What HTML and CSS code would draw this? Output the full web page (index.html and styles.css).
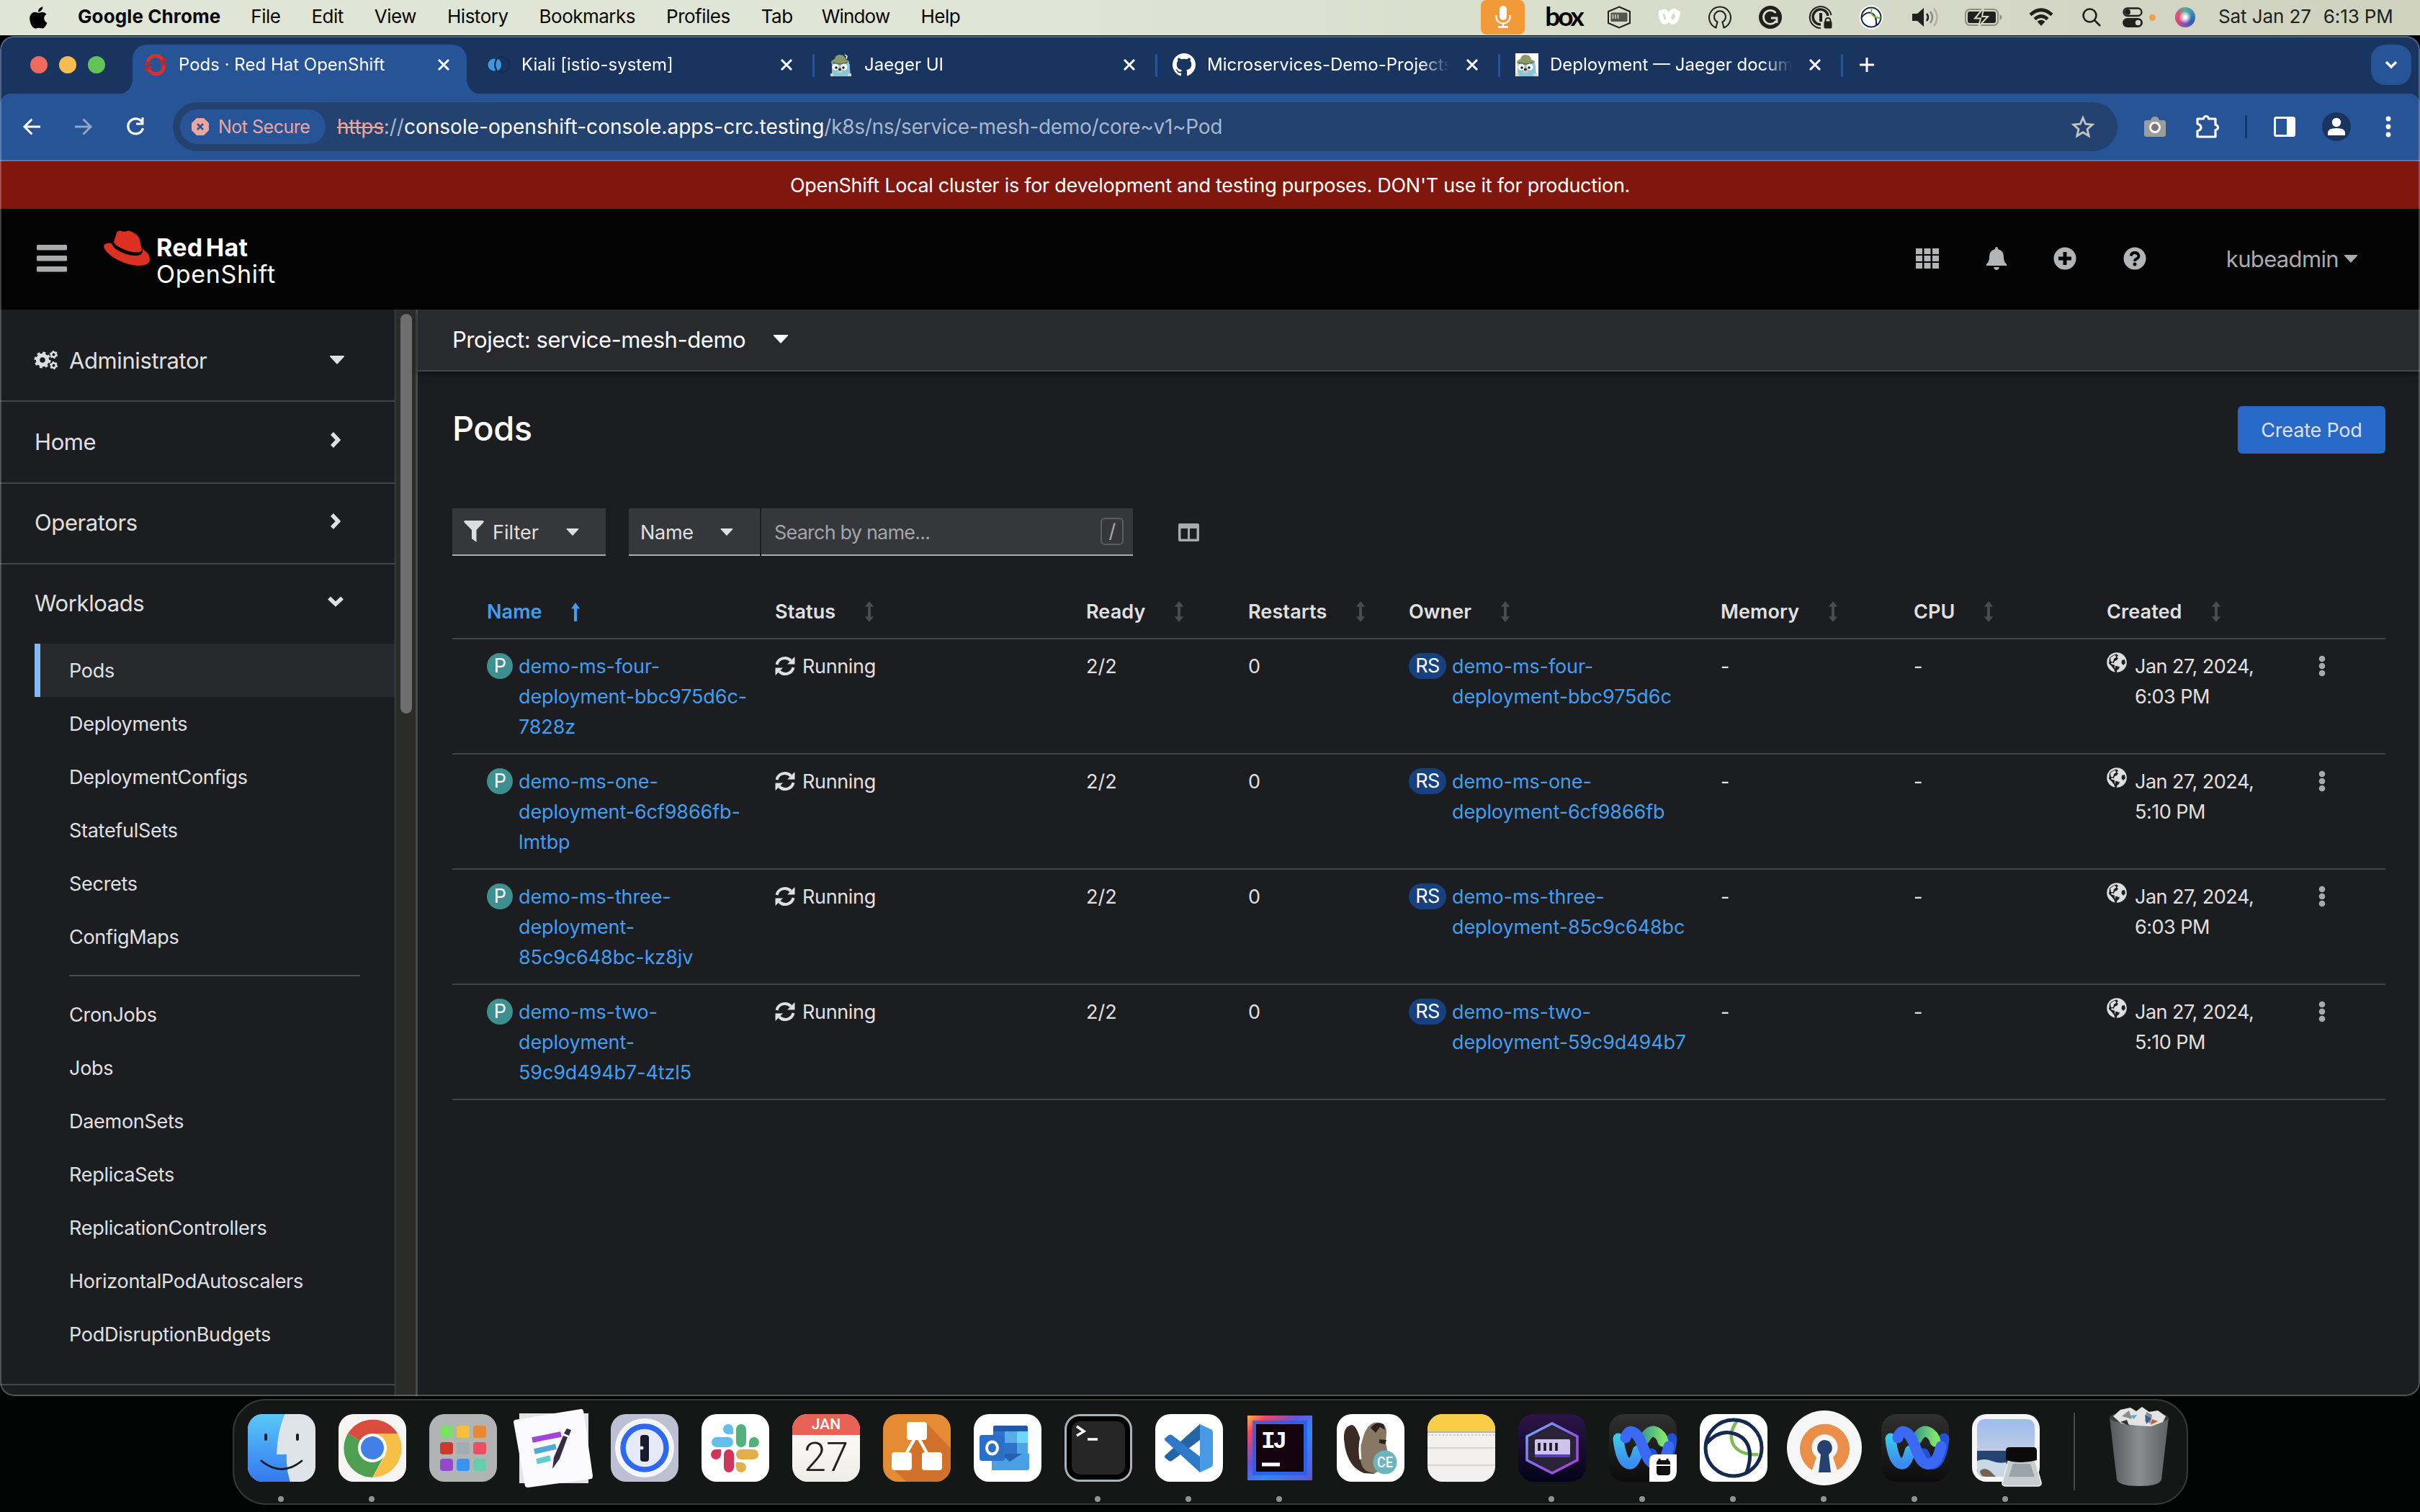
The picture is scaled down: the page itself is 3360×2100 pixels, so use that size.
FILE: index.html
```html
<!DOCTYPE html>
<html lang="en">
<head>
<meta charset="utf-8">
<title>Pods · Red Hat OpenShift</title>
<link rel="stylesheet" href="styles.css">
</head>
<body>
<svg class="defs" width="0" height="0">
  <defs>
    <symbol id="caret" viewBox="0 0 20 12"><path d="M0.5 0h19q1 .4.3 1.500L11 11q-1 1.200-2 0L.2 1.500Q-.5.400.5 0Z" fill="currentColor"/></symbol>
    <symbol id="chev" viewBox="0 0 16 24"><path d="M4 3l8.500 9L4 21" fill="none" stroke="currentColor" stroke-width="5.500"/></symbol>
    <symbol id="close" viewBox="0 0 20 20"><path d="M3 3l14 14M17 3L3 17" stroke="#fff" stroke-width="3" fill="none"/></symbol>
    <symbol id="sort" viewBox="0 0 14 30"><path d="M7 0l6.500 8H9v14h4.500L7 30 .5 22H5V8H.5Z" fill="#4b4c51"/></symbol>
    <symbol id="sync" viewBox="0 0 28 28"><g fill="none" stroke="#e0e0e0" stroke-width="4"><path d="M2.500 12A11.500 11.500 0 0 1 22 6.500"/><path d="M25.500 16A11.500 11.500 0 0 1 6 21.500"/></g><path d="M27.500 1v10.500H17ZM.5 27V16.500H11Z" fill="#e0e0e0"/></symbol>
    <symbol id="globe" viewBox="0 0 28 28"><circle cx="14" cy="14" r="13.800" fill="#e0e0e0"/><path d="M4 8q4-5 10-5.500l2 2-2 2 2 1.500-2 3-3 1-1 3-3-1-1 2 4 1.500 5 .5 3 2-1 3-3 2v3l-2 .5-2-5-3-4-4-4ZM21 11l4-1 1 5-3 3-2.500-3Z" fill="#1c1d21"/><path d="M5 8q4-4 7-4l1 3-3 2-1 4-3 0ZM11 16l5 1 2 2-3 4-2 2-2-4Z" fill="#e0e0e0"/><path d="M12 18.500l5 1.500-2 3.500-1 3-2-3Z" fill="#1c1d21"/></symbol>
    <symbol id="kebab" viewBox="0 0 10 30"><g fill="#a9aaad"><circle cx="5" cy="5" r="4.300"/><circle cx="5" cy="15" r="4.300"/><circle cx="5" cy="25" r="4.300"/></g></symbol>
    <symbol id="gopher" viewBox="0 0 32 32"><path d="M3 32V17Q2 9 8 8h12q9 2 8 13l1 11Z" fill="#86c7da"/><path d="M2 14q-1-4 5-6 1-6 7-6 7 0 8 7 6 1 5 4-11 3-25 1Z" fill="#8b9a68"/><path d="M5 12q10 4 19 0v2q-10 3-19 1Z" fill="#5d6b40"/><path d="M21 2l3 2-1 4" stroke="#fff" stroke-width="1.500" fill="none"/><circle cx="8" cy="19" r="4.500" fill="#fff"/><circle cx="20" cy="19" r="4.500" fill="#fff"/><circle cx="9" cy="20" r="1.800" fill="#222"/><circle cx="19" cy="20" r="1.800" fill="#222"/><path d="M11 23h6v4h-6Z" fill="#e7cdb0"/><circle cx="14" cy="22.500" r="2" fill="#40352c"/><path d="M1 28h4v4H1ZM25 28h5v4h-5Z" fill="#e7cdb0"/></symbol>
    <linearGradient id="wxc" x1="0" y1="0" x2="0" y2="1"><stop offset="0" stop-color="#3ec6e8"/><stop offset="1" stop-color="#3b8cf0"/></linearGradient>
    <linearGradient id="wxg" x1="0" y1="0" x2="1" y2="0"><stop offset="0" stop-color="#3fa08c"/><stop offset="1" stop-color="#80e46a"/></linearGradient>
    <linearGradient id="dk" x1="0" y1="0" x2="0" y2="1"><stop offset="0" stop-color="#303030"/><stop offset="1" stop-color="#0c0c0c"/></linearGradient>
    <symbol id="webex" viewBox="0 0 96 96"><rect x="1" y="1" width="94" height="94" rx="21" fill="url(#dk)"/><g fill="none" stroke-width="15" stroke-linecap="round"><path d="M88 35Q85 66 74 70 66 72 60 56" stroke="#2450d8"/><path d="M14 35Q17 66 28 70 36 72 41 52" stroke="url(#wxc)"/><path d="M50 36Q57 22 66 26 74 30 76 39" stroke="url(#wxg)"/><path d="M24 34Q27 24 33 25.500C49 29 49 70 66 70.500 76 70 80 62 84 46" stroke="#3c69f4"/></g></symbol>
  </defs>
</svg>

<header class="menubar">
  <svg class="apple" viewBox="0 0 28 32"><path d="M19 0q.5 3-2 5.500T12.500 8Q12 5 14 3T19 0ZM25.500 23.500Q22 31.500 18.500 31.500 17 31.500 15.500 31T11 31q-1.500.8-3 .5Q4 31 1.500 24-1.500 15 2.500 10.500 6 7 10.500 8.500l2.500.8 3-.9q5-1.600 8.500 2.600-4 2.500-3.500 6.500t4.500 6Z"/></svg>
  <nav class="menus"><b>Google Chrome</b><span>File</span><span>Edit</span><span>View</span><span>History</span><span>Bookmarks</span><span>Profiles</span><span>Tab</span><span class="win">Window</span><span>Help</span></nav>
  <div class="tray">
    <i class="mic"><svg width="22" height="32" viewBox="0 0 22 32"><rect x="6" y="0" width="10" height="20" rx="5" fill="#fff"/><path d="M1.500 13v3a9.500 8.500 0 0 0 19 0v-3M11 24v5M4 29.500h14" stroke="#fff" stroke-width="2.300" fill="none"/></svg></i>
    <i class="c84"><b class="boxlogo">box</b></i>
    <i class="c70"><svg width="32" height="32" viewBox="0 0 32 32"><path d="M16 1.500L31 8v16l-15 6.500L1 24V8Z" fill="none" stroke="#20211d" stroke-width="2"/><rect x="4.500" y="9.500" width="23" height="12.500" rx="1.500" fill="#55564e"/><path d="M7.500 12v6M11 12v6M14.500 12v6" stroke="#e0e3d4" stroke-width="1.400"/></svg></i>
    <i class="c70"><svg width="32" height="24" viewBox="0 0 32 24" fill="none" stroke="#fff" stroke-width="6" stroke-linecap="round"><path d="M3.500 5q1.500 14 5.500 14t6-7 6-9q5-1 5 5"/><path d="M7 4q4-2 6 5t7 10q6 0 8-13"/></svg></i>
    <i class="c70"><svg width="32" height="32" viewBox="0 0 32 32" fill="none" stroke="#20211d" stroke-width="2"><path d="M10.500 30.500A15 15 0 1 1 21.500 30.500L19.500 22.500A8 8 0 1 0 12.500 22.500Z"/></svg></i>
    <i class="c70"><svg width="32" height="32" viewBox="0 0 32 32"><circle cx="16" cy="16" r="16" fill="#20211d"/><path d="M23.500 10A9.500 9.500 0 1 0 24 21M25 24v-7h-8" fill="none" stroke="#dcdfcf" stroke-width="2.800"/></svg></i>
    <i class="c70"><svg width="32" height="32" viewBox="0 0 32 32" fill="none" stroke="#20211d"><path d="M16 31A15 15 0 1 1 30.500 13" stroke-width="2"/><path d="M16 26A10.500 10.500 0 1 1 26 14" stroke-width="3.500"/><path d="M16 10v12" stroke-width="4"/><path d="M22.500 22v-1.500a3.500 3.500 0 0 1 7 0V22" stroke-width="2"/><rect x="21" y="22" width="10" height="9" rx="1" fill="#20211d"/></svg></i>
    <i class="c70"><svg width="34" height="34" viewBox="0 0 34 34"><circle cx="17" cy="17" r="16.500" fill="#fff"/><g fill="none" stroke="#17294d" stroke-width="2"><circle cx="17" cy="17" r="13.500"/><path d="M4 17q6-8 13-6 8 3 7 17"/></g><path d="M18 4q-4 13 12 14" fill="none" stroke="#79b84a" stroke-width="2"/></svg></i>
    <i class="c68 vol"><svg width="38" height="28" viewBox="0 0 38 28"><path d="M0 9h7l9-8v26l-9-8H0Z" fill="#20211d"/><g fill="none" stroke-width="2.600"><path d="M20 9q4 5 0 10" stroke="#20211d"/><path d="M25 6q6 8 0 16" stroke="#8b8e80"/><path d="M30 2q9 12 0 24" stroke="#b0b3a3"/></g></svg></i>
    <i class="c92"><svg width="52" height="24" viewBox="0 0 52 24"><rect x="1" y="1" width="45" height="22" rx="6" fill="none" stroke="#8b8e80" stroke-width="2"/><rect x="4" y="4" width="39" height="16" rx="3" fill="#20211d"/><path d="M48.500 8q3 1.500 3 4t-3 4Z" fill="#8b8e80"/><path d="M26-1L14 13.500h8L19 25l13-14h-8Z" fill="#20211d" stroke="#d5d8c6" stroke-width="2"/></svg></i>
    <i class="c68"><svg width="34" height="26" viewBox="0 0 34 26" fill="none" stroke="#20211d" stroke-width="4.600"><path d="M2 9.500Q17-4 32 9.500M8 15.500q9-8 18 0"/><path d="M17 25l-5.500-6q5.500-4.500 11 0Z" fill="#20211d" stroke="none"/></svg></i>
    <i class="c72"><svg width="26" height="26" viewBox="0 0 26 26" fill="none" stroke="#20211d" stroke-width="2.600"><circle cx="10.500" cy="10.500" r="9"/><path d="M17 17l8 8"/></svg></i>
    <i class="c42"><svg width="28" height="28" viewBox="0 0 28 28"><rect x="1.500" y="1.500" width="25" height="10.500" rx="5.200" fill="none" stroke="#20211d" stroke-width="2.400"/><circle cx="7" cy="6.800" r="4" fill="#20211d"/><rect y="15" width="28" height="13" rx="6.500" fill="#20211d"/><circle cx="21.500" cy="21.500" r="3.700" fill="#d5d8c6"/></svg></i>
    <i class="c12"><i class="dot"></i></i>
    <i class="c80"><i class="siri"></i></i>
    <div class="clock"><span>Sat Jan 27</span><span>6:13 PM</span></div>
  </div>
</header>

<section class="window">
  <div class="tabstrip">
    <div class="lights"><i class="l-r"></i><i class="l-y"></i><i class="l-g"></i></div>
    <div class="tab active">
      <svg class="fav" viewBox="0 0 32 32" fill="none" stroke="#d8302c" stroke-width="5"><path d="M5 12Q9 2 18 3.500q5 1 8 5.500M27 17q1 9-8 11.500Q11 30 6 22"/><path d="M1 16l8-3M1 22l9-3M22 12l9-4M23 17l8-3" stroke-width="4" stroke="#b8282f"/></svg>
      <span class="tt">Pods · Red Hat OpenShift</span><svg class="x"><use href="#close"/></svg>
    </div>
    <div class="tab sep">
      <svg class="fav" viewBox="0 0 32 32"><circle cx="21" cy="16" r="10.500" fill="none" stroke="#14304f" stroke-width="2"/><path d="M10 7.500a8.500 8.500 0 0 0 0 17q1.500 0 2-.5-4-8 0-16-.5-.5-2-.5Z" fill="#3f97dd"/><path d="M15 7.500q5 3 5 8.500t-5 8.500q-5-8.500 0-17Z" fill="#3f97dd"/></svg>
      <span class="tt">Kiali [istio-system]</span><svg class="x"><use href="#close"/></svg>
    </div>
    <div class="tab sep"><svg class="fav"><use href="#gopher"/></svg><span class="tt">Jaeger UI</span><svg class="x"><use href="#close"/></svg></div>
    <div class="tab sep">
      <svg class="fav" viewBox="0 0 16 16"><path fill="#fff" d="M8 0C3.580 0 0 3.580 0 8c0 3.540 2.290 6.530 5.470 7.590.4.070.550-.170.550-.380 0-.190-.010-.820-.010-1.490-2.010.370-2.530-.490-2.690-.940-.090-.230-.480-.940-.820-1.130-.280-.150-.680-.520-.010-.530.630-.010 1.080.580 1.230.820.720 1.210 1.870.870 2.330.660.070-.520.280-.870.510-1.070-1.780-.200-3.640-.890-3.640-3.950 0-.870.310-1.590.820-2.150-.080-.200-.360-1.020.080-2.120 0 0 .670-.210 2.200.820.640-.180 1.320-.270 2-.270s1.360.090 2 .270c1.530-1.040 2.200-.820 2.200-.820.440 1.100.160 1.920.080 2.120.510.560.820 1.270.820 2.150 0 3.070-1.870 3.750-3.650 3.950.290.250.540.730.540 1.480 0 1.070-.010 1.930-.010 2.200 0 .210.150.460.550.380A8.010 8.010 0 0 0 16 8c0-4.420-3.580-8-8-8Z"/></svg>
      <span class="tt">Microservices-Demo-Projects</span><svg class="x"><use href="#close"/></svg>
    </div>
    <div class="tab sep"><svg class="fav white"><use href="#gopher"/></svg><span class="tt">Deployment — Jaeger documentation</span><svg class="x"><use href="#close"/></svg></div>
    <svg class="plus" viewBox="0 0 20 20"><path d="M10 0v20M0 10h20" stroke="#fff" stroke-width="3"/></svg>
    <div class="tabsearch"><svg width="18" height="12" viewBox="0 0 18 12"><path d="M2 2l7 7 7-7" fill="none" stroke="#fff" stroke-width="3.500"/></svg></div>
  </div>

  <div class="toolbar">
    <div class="navbtns">
      <svg width="24" height="24" viewBox="0 0 24 24" fill="none" stroke="#fff" stroke-width="3"><path d="M24 12H3M12.500 1.500L2 12l10.500 10.500"/></svg>
      <svg width="24" height="24" viewBox="0 0 24 24" fill="none" stroke="#8ea6cb" stroke-width="3"><path d="M0 12h21M11.500 1.500L22 12 11.500 22.500"/></svg>
      <svg width="26" height="26" viewBox="0 0 26 26"><path d="M22 6.500A10.500 10.500 0 1 0 23.500 15" fill="none" stroke="#fff" stroke-width="3.200"/><path d="M24.500 0v10.500H14V7.500h7.500V0Z" fill="#fff"/></svg>
    </div>
    <div class="omnibox">
      <div class="chip"><svg width="24" height="24" viewBox="0 0 24 24"><path d="M7 0h10l7 7v10l-7 7H7l-7-7V7Z" fill="#eda69e"/><path d="M8 8l8 8M16 8l-8 8" stroke="#275496" stroke-width="2.600"/></svg><span>Not Secure</span></div>
      <div class="url"><s>https</s><span class="dim">://</span><span class="host">console-openshift-console.apps-crc.testing</span><span class="dim path">/k8s/ns/service-mesh-demo/core~v1~Pod</span></div>
      <svg class="star" width="32" height="32" viewBox="0 0 32 32"><path d="M16 3.500l3.700 8.700 9.500.9-7.200 6.300 2.200 9.300L16 23.700l-8.200 5 2.200-9.300-7.200-6.300 9.500-.9Z" fill="none" stroke="#c4c4c2" stroke-width="2.800"/></svg>
    </div>
    <div class="ext">
      <svg width="30" height="28" viewBox="0 0 30 28"><path d="M3 5h6q1-5 6-5t6 5h6q3 0 3 3v17q0 3-3 3H3q-3 0-3-3V8q0-3 3-3Z" fill="#9b9c9c"/><circle cx="15" cy="15" r="6.500" fill="#777" stroke="#fff" stroke-width="3"/></svg>
      <svg width="34" height="34" viewBox="0 0 34 34"><path d="M3 6h8.500a3.500 3.500 0 1 1 7 0H28v8.500a3.500 3.500 0 1 1 0 7V31H3v-8q5-1.500 5-5t-5-5Z" fill="none" stroke="#fff" stroke-width="3.200" stroke-linejoin="round"/></svg>
      <i class="vsep"></i>
      <svg width="30" height="28" viewBox="0 0 30 28"><rect x="1.500" y="1.500" width="27" height="25" rx="2" fill="none" stroke="#fff" stroke-width="3"/><path d="M18 0h10v28H18Z" fill="#fff"/></svg>
      <svg width="40" height="40" viewBox="0 0 40 40"><circle cx="20" cy="20" r="20" fill="#19355f"/><circle cx="20" cy="14" r="6.200" fill="#fff"/><path d="M8 32v-4q0-6 12-6t12 6v4Z" fill="#fff"/></svg>
      <svg width="8" height="30" viewBox="0 0 8 30" fill="#fff"><circle cx="4" cy="4" r="3.400"/><circle cx="4" cy="15" r="3.400"/><circle cx="4" cy="26" r="3.400"/></svg>
    </div>
  </div>

  <div class="notice">OpenShift Local cluster is for development and testing purposes. DON'T use it for production.</div>

  <div class="masthead">
    <svg class="burger" width="42" height="38" viewBox="0 0 42 38" fill="#a8aaac"><rect width="42" height="7.500" rx="1.500"/><rect y="15" width="42" height="7.500" rx="1.500"/><rect y="30" width="42" height="7.500" rx="1.500"/></svg>
    <svg class="hat" width="64" height="49" viewBox="0 0 64 49"><path d="M14 16L18 3Q20-1 26 1.500l5 0q3-2 7 0l7 4q4 3 5 8l3 13q0 4-7 4-9 0-20-5T14 16ZM11 18q1 5 9 10 14 8 27 7 6-1 7-5l0-4q10 6 10 14 0 9-17 9-16-1-31-10T0 22q1-5 11-4Z" fill="#dc3022"/></svg>
    <div class="brand"><b>Red Hat</b><span>OpenShift</span></div>
    <div class="tools">
      <svg width="32" height="28" viewBox="0 0 32 28" fill="#b2b4b6"><path d="M0 0h9v8H0ZM11.500 0h9v8h-9ZM23 0h9v8h-9ZM0 10h9v8H0ZM11.500 10h9v8h-9ZM23 10h9v8h-9ZM0 20h9v8H0ZM11.500 20h9v8h-9ZM23 20h9v8h-9Z"/></svg>
      <svg width="28" height="32" viewBox="0 0 28 32" fill="#b2b4b6"><path d="M14 0q2 0 2 3 8 2 8 11 0 7 4 10v2H0v-2q4-3 4-10 0-9 8-11 0-3 2-3ZM10 28h8q-1 4-4 4t-4-4Z"/></svg>
      <svg width="32" height="32" viewBox="0 0 32 32"><circle cx="16" cy="16" r="15.500" fill="#b2b4b6"/><path d="M16 7v18M7 16h18" stroke="#030303" stroke-width="5"/></svg>
      <svg width="32" height="32" viewBox="0 0 32 32"><circle cx="16" cy="16" r="15.500" fill="#b2b4b6"/><path d="M10.500 12.500Q11.500 8 16 8t5.500 4.300q0 2.700-3 4.200-2.500 1.200-2.500 3.200" fill="none" stroke="#030303" stroke-width="3.800"/><circle cx="16" cy="24" r="2.500" fill="#030303"/></svg>
      <div class="user">kubeadmin<svg width="18" height="11"><use href="#caret"/></svg></div>
    </div>
  </div>

  <div class="body">
    <aside class="sidebar">
      <div class="persp"><svg width="32" height="28" viewBox="0 0 32 28"><g fill="none" stroke="#dcdddf"><circle cx="11" cy="14" r="6.500" stroke-width="5.500"/><circle cx="11" cy="14" r="10" stroke-width="3" stroke-dasharray="4 3.850"/><circle cx="26.500" cy="6.500" r="3.300" stroke-width="2.600"/><circle cx="26.500" cy="6.500" r="4.800" stroke-width="1.600" stroke-dasharray="2.500 2.500"/><circle cx="26.500" cy="21.500" r="3.300" stroke-width="2.600"/><circle cx="26.500" cy="21.500" r="4.800" stroke-width="1.600" stroke-dasharray="2.500 2.500"/></g></svg><span>Administrator</span><svg class="car" width="20" height="12"><use href="#caret"/></svg></div>
      <div class="sec"><span>Home</span><svg width="16" height="24"><use href="#chev"/></svg></div>
      <div class="sec two"><span>Operators</span><svg width="16" height="24"><use href="#chev"/></svg></div>
      <div class="sec open"><span>Workloads</span><svg width="24" height="16" viewBox="0 0 24 16"><path d="M3 3.500l9 8.500 9-8.500" fill="none" stroke="currentColor" stroke-width="5.500"/></svg></div>
      <ul class="links">
        <li class="cur">Pods</li><li>Deployments</li><li>DeploymentConfigs</li><li>StatefulSets</li><li>Secrets</li><li>ConfigMaps</li>
        <li class="rule"></li>
        <li>CronJobs</li><li>Jobs</li><li>DaemonSets</li><li>ReplicaSets</li><li>ReplicationControllers</li><li>HorizontalPodAutoscalers</li><li>PodDisruptionBudgets</li>
      </ul>
    </aside>
    <div class="scroll"><i></i></div>
    <main class="main">
      <div class="project"><span>Project: service-mesh-demo</span><svg width="20" height="12"><use href="#caret"/></svg></div>
      <div class="content">
        <div class="head"><h1>Pods</h1><button>Create Pod</button></div>
        <div class="filters">
          <div class="ctl filter"><svg width="28" height="30" viewBox="0 0 28 30"><path d="M1 0h26q1.500 1 0 3L17.500 13v17L11 25V13L1 3Q-.5 1 1 0Z" fill="#dcdddf"/></svg><span>Filter</span><svg class="c" width="18" height="10"><use href="#caret"/></svg></div>
          <div class="ctl name"><span>Name</span><svg class="c" width="18" height="10"><use href="#caret"/></svg></div>
          <div class="ctl search"><span>Search by name...</span><kbd>/</kbd></div>
          <svg class="cols" width="29" height="25" viewBox="0 0 29 25"><path fill-rule="evenodd" d="M2 0h25q2 0 2 2v21q0 2-2 2H2q-2 0-2-2V2Q0 0 2 0ZM3.500 7v14.500h9.500V7ZM16 7v14.500h9.500V7Z" fill="#a9aaac"/></svg>
        </div>
        <div class="table">
          <div class="row th">
            <div class="asc">Name<svg class="up" width="12" height="26" viewBox="0 0 12 26"><path d="M6 0l6 8.500H8V26H4V8.500H0Z" fill="#429ef0"/></svg></div>
            <div>Status<svg><use href="#sort"/></svg></div><div>Ready<svg><use href="#sort"/></svg></div><div>Restarts<svg><use href="#sort"/></svg></div><div>Owner<svg><use href="#sort"/></svg></div><div>Memory<svg><use href="#sort"/></svg></div><div>CPU<svg><use href="#sort"/></svg></div><div>Created<svg><use href="#sort"/></svg></div>
          </div>
          <div class="row">
            <div class="res"><b class="p">P</b><a>demo-ms-four-<br>deployment-bbc975d6c-<br>7828z</a></div>
            <div class="st"><svg><use href="#sync"/></svg>Running</div><div class="n">2/2</div><div class="n">0</div>
            <div class="res"><b class="rs">RS</b><a>demo-ms-four-<br>deployment-bbc975d6c</a></div><div>-</div><div>-</div>
            <div class="dt"><svg><use href="#globe"/></svg><span>Jan 27, 2024,<br>6:03 PM</span></div><div class="kb"><svg><use href="#kebab"/></svg></div>
          </div>
          <div class="row">
            <div class="res"><b class="p">P</b><a>demo-ms-one-<br>deployment-6cf9866fb-<br>lmtbp</a></div>
            <div class="st"><svg><use href="#sync"/></svg>Running</div><div class="n">2/2</div><div class="n">0</div>
            <div class="res"><b class="rs">RS</b><a>demo-ms-one-<br>deployment-6cf9866fb</a></div><div>-</div><div>-</div>
            <div class="dt"><svg><use href="#globe"/></svg><span>Jan 27, 2024,<br>5:10 PM</span></div><div class="kb"><svg><use href="#kebab"/></svg></div>
          </div>
          <div class="row">
            <div class="res"><b class="p">P</b><a>demo-ms-three-<br>deployment-<br>85c9c648bc-kz8jv</a></div>
            <div class="st"><svg><use href="#sync"/></svg>Running</div><div class="n">2/2</div><div class="n">0</div>
            <div class="res"><b class="rs">RS</b><a>demo-ms-three-<br>deployment-85c9c648bc</a></div><div>-</div><div>-</div>
            <div class="dt"><svg><use href="#globe"/></svg><span>Jan 27, 2024,<br>6:03 PM</span></div><div class="kb"><svg><use href="#kebab"/></svg></div>
          </div>
          <div class="row">
            <div class="res"><b class="p">P</b><a>demo-ms-two-<br>deployment-<br>59c9d494b7-4tzl5</a></div>
            <div class="st"><svg><use href="#sync"/></svg>Running</div><div class="n">2/2</div><div class="n">0</div>
            <div class="res"><b class="rs">RS</b><a>demo-ms-two-<br>deployment-59c9d494b7</a></div><div>-</div><div>-</div>
            <div class="dt"><svg><use href="#globe"/></svg><span>Jan 27, 2024,<br>5:10 PM</span></div><div class="kb"><svg><use href="#kebab"/></svg></div>
          </div>
        </div>
      </div>
    </main>
  </div>
</section>

<footer class="dock">
  <div class="app on"><svg viewBox="0 0 96 96"><defs><linearGradient id="fi" x1="0" y1="0" x2="0" y2="1"><stop offset="0" stop-color="#5ac8f8"/><stop offset="1" stop-color="#3478f0"/></linearGradient><clipPath id="rr"><rect x="1" y="1" width="94" height="94" rx="21"/></clipPath></defs><g clip-path="url(#rr)"><rect width="96" height="96" fill="#dfe3ea"/><path d="M0 0h53Q42 24 41 57h14q-1 20 5 39H0Z" fill="url(#fi)"/></g><g fill="none" stroke="#1b1b20" stroke-width="4" stroke-linecap="round"><path d="M26 30v6M70 30v6"/><path d="M20 66q28 23 56 0" stroke-width="2.800"/></g></svg></div>
  <div class="app on"><svg viewBox="0 0 96 96"><rect x="1" y="1" width="94" height="94" rx="21" fill="#f6f5f4"/><path d="M48 48L14 28A40.500 40.500 0 0 1 83 28Z" fill="#da4c3d"/><path d="M48 48V28h35A40.500 40.500 0 0 1 48 89l18-31Z" fill="#f5c043"/><path d="M48 48l17 10-17 31A40.500 40.500 0 0 1 14 28Z" fill="#4f9f52"/><circle cx="48" cy="48" r="20" fill="#fff"/><circle cx="48" cy="48" r="16" fill="#4280e8"/></svg></div>
  <div class="app"><svg viewBox="0 0 96 96"><rect x="1" y="1" width="94" height="94" rx="21" fill="#b1b3b4"/><g><rect x="16" y="17" width="18" height="17" rx="4" fill="#7be068"/><rect x="39" y="17" width="18" height="17" rx="4" fill="#f6bd40"/><rect x="62" y="17" width="18" height="17" rx="4" fill="#e88734"/><rect x="16" y="40" width="18" height="17" rx="4" fill="#cb392c"/><rect x="39" y="40" width="18" height="17" rx="4" fill="#a3adb1"/><rect x="62" y="40" width="18" height="17" rx="4" fill="#ed4e61"/><rect x="16" y="63" width="18" height="17" rx="4" fill="#914ac9"/><rect x="39" y="63" width="18" height="17" rx="4" fill="#3894f2"/><rect x="62" y="63" width="18" height="17" rx="4" fill="#67cdab"/></g></svg></div>
  <div class="app"><svg viewBox="0 0 96 96"><path d="M0 0h96v97H0Z" fill="#e3e3e6"/><path d="M-6 9L86-6Q88-6 89 -4l13 91q0 3-2 4L12 103q-3 0-4-2L-8 12q0-2 2-3Z" fill="#fbfbfd"/><g stroke-linecap="butt" fill="none"><path d="M18 37l40-8" stroke="#a044dc" stroke-width="7.500"/><path d="M21 53l30-7" stroke="#54a7cf" stroke-width="7.500"/><path d="M24 67l19-5" stroke="#5cd0c8" stroke-width="7.500"/></g><path d="M46 77l2-16 13-30 6 2-11 30ZM62 28l4-7 6 2-3 8Z" fill="#382b45"/></svg></div>
  <div class="app"><svg viewBox="0 0 96 96"><rect x="1" y="1" width="94" height="94" rx="21" fill="#bcc0d2"/><circle cx="48" cy="48" r="41" fill="#f5f6fb"/><circle cx="48" cy="48" r="30" fill="#e6eaf8" stroke="#2c68f2" stroke-width="7.500"/><rect x="42" y="30" width="12" height="37" rx="4" fill="#171b30"/><circle cx="44" cy="48" r="2.500" fill="#e6eaf8"/></svg></div>
  <div class="app"><svg viewBox="0 0 96 96"><rect x="1" y="1" width="94" height="94" rx="21" fill="#fff"/><g fill="#63bfe9"><rect x="15" y="33" width="30" height="14" rx="7"/><path d="M45 29V22a7 7 0 1 0-7 7Z"/></g><g fill="#54b07d"><rect x="49" y="15" width="14" height="32" rx="7"/><path d="M67 47h7a7 7 0 1 0-7-7Z"/></g><g fill="#ce375c"><rect x="32" y="50" width="14" height="32" rx="7"/><path d="M28 50h-7a7 7 0 1 0 7 7Z"/></g><g fill="#e2b04a"><rect x="49" y="50" width="31" height="14" rx="7"/><path d="M49 68v7a7 7 0 1 0 7-7Z"/></g></svg></div>
  <div class="app"><div class="cal"><b>JAN</b><span>27</span></div></div>
  <div class="app"><svg viewBox="0 0 96 96"><g clip-path="url(#rr)"><rect width="96" height="96" fill="#e48b34"/><path d="M60 12L96 50v46H34L14 76Z" fill="#d0712c"/></g><path d="M48 30L27 66M48 30l20 36" stroke="#fff" stroke-width="4.500"/><g fill="#fff"><rect x="34" y="12" width="28" height="25" rx="4"/><rect x="13" y="54" width="28" height="25" rx="4"/><rect x="55" y="54" width="28" height="25" rx="4"/></g></svg></div>
  <div class="app"><svg viewBox="0 0 96 96"><rect x="1" y="1" width="94" height="94" rx="21" fill="#fff"/><rect x="28" y="17" width="48" height="46" rx="3" fill="#2f72cc"/><path d="M28 20q0-3 3-3h42q3 0 3 3v5H28Z" fill="#2358a4"/><path d="M44 25h17v16H44Z" fill="#57abe8"/><path d="M61 25h15v16H61Z" fill="#6fd6fb"/><path d="M61 41h15v22H61Z" fill="#50a4e5"/><path d="M26 56h52v20q0 3-3 3H26Z" fill="#4aa0e4"/><path d="M37 56h31L51 67Z" fill="#2560b2"/><rect x="9" y="30" width="35" height="36" rx="4" fill="#2c6fc9"/><ellipse cx="26.500" cy="48" rx="7.500" ry="8.500" fill="none" stroke="#fff" stroke-width="4"/></svg></div>
  <div class="app on"><svg viewBox="0 0 96 96"><rect x="1" y="1" width="94" height="94" rx="21" fill="#a9b4ba"/><rect x="4" y="4" width="88" height="88" rx="18" fill="#030303"/><rect x="11" y="11" width="74" height="74" rx="12" fill="#262626"/><path d="M18 18l10 7-10 6M33 36h14" fill="none" stroke="#fff" stroke-width="3.500"/></svg></div>
  <div class="app on"><svg viewBox="0 0 96 96"><rect x="1" y="1" width="94" height="94" rx="21" fill="#fff"/><path d="M63 15L15 58q-2 2 0 4l5 4q2 1 4 0L63 37Z" fill="#2565a6"/><path d="M63 82L15 38q-2-2 0-4l5-4q2-1 4 0L63 60Z" fill="#3079c8"/><path d="M63 15l15 7q3 1 3 5v43q0 4-3 5l-15 7Z" fill="#479be6"/></svg></div>
  <div class="app on"><svg viewBox="0 0 96 96"><defs><linearGradient id="ij" x1="0" y1="0" x2="1" y2="1"><stop offset="0" stop-color="#f8b84a"/><stop offset=".15" stop-color="#ee4568"/><stop offset=".4" stop-color="#6058dc"/><stop offset=".6" stop-color="#3388f0"/><stop offset="1" stop-color="#5f55d8"/></linearGradient></defs><rect x="3" y="3" width="90" height="90" fill="url(#ij)"/><path d="M10 10h76v76H10Z" fill="#225fe8" opacity=".8"/><rect x="15" y="15" width="66" height="66" fill="#14020f"/><text x="22" y="48" font-family="Liberation Mono" font-size="33" font-weight="700" fill="#fff" textLength="36">IJ</text><path d="M23 71h25" stroke="#fff" stroke-width="5"/></svg></div>
  <div class="app"><svg viewBox="0 0 96 96"><rect x="1" y="1" width="94" height="94" rx="21" fill="#fff"/><path d="M22 16q-12 2-11 20 3 38 28 47l14 1 6-20-20-8Q30 16 22 16Z" fill="#3a2b26"/><path d="M42 22q8-12 18-9 11 2 10 14l-1 14 2 10-9 28-8 4Q31 82 34 54q1-18 8-32Z" fill="#897765"/><path d="M48 20q8-10 18-5l2 8-7-4-6 8ZM60 36l10 1-2 6-8-2Z" fill="#2b211f"/><path d="M42 20Q30 34 34 64" fill="none" stroke="#fff" stroke-width="3"/><circle cx="68" cy="68" r="16.500" fill="#6cb5bd"/><text x="57" y="75" font-family="Roboto" font-size="20" font-weight="500" fill="#fff" textLength="22" lengthAdjust="spacingAndGlyphs">CE</text></svg></div>
  <div class="app"><svg viewBox="0 0 96 96"><g clip-path="url(#rr)"><rect width="96" height="96" fill="#f1f0ee"/><rect width="96" height="25" fill="#f8cd48"/><path d="M0 26h96" stroke="#b7b2a4" stroke-width="2"/><path d="M2 30h94" stroke="#c8c7c4" stroke-width="2" stroke-dasharray="2 3"/><path d="M0 48h96M0 72h96" stroke="#d6d5d7" stroke-width="2"/></g></svg></div>
  <div class="app on"><svg viewBox="0 0 96 96"><defs><linearGradient id="pd" x1="0" y1="0" x2="0" y2="1"><stop offset="0" stop-color="#2c1548"/><stop offset="1" stop-color="#04041a"/></linearGradient><linearGradient id="ps" x1="0" y1="0" x2="1" y2="1"><stop offset="0" stop-color="#6fb6fa"/><stop offset=".5" stop-color="#8a62ec"/><stop offset="1" stop-color="#b13fd0"/></linearGradient></defs><rect x="1" y="1" width="94" height="94" rx="21" fill="url(#pd)"/><path d="M48 14l35 18v33L48 83 13 65V32Z" fill="#2a2338" stroke="url(#ps)" stroke-width="3.500"/><rect x="24" y="36" width="49" height="25" rx="2" fill="#cdc4ec"/><path d="M24 57h49v4H24Z" fill="#5540c0"/><path d="M30 41v11M38 41v11M46 41v11M54 41v11" stroke="#1c1726" stroke-width="3.600"/></svg></div>
  <div class="app on"><svg viewBox="0 0 96 96"><use href="#webex"/><path d="M57 66q0-9 9-9h29v22q0 16-16 16H57Z" fill="#fff"/><path d="M67 69q0-4 4-4h11q4 0 4 4v2H67ZM67 73h19v9q0 4-4 4H71q-4 0-4-4Z" fill="#111"/><path d="M71 67v-4M82 67v-4" stroke="#111" stroke-width="3"/></svg></div>
  <div class="app on"><svg viewBox="0 0 96 96"><rect x="1" y="1" width="94" height="94" rx="21" fill="#fff"/><path d="M54 9C34 34 48 60 82 57" fill="none" stroke="#7cbb54" stroke-width="4.500"/><g fill="none" stroke="#152a50" stroke-width="5"><circle cx="48" cy="48" r="39"/><path d="M10 42Q26 24 44 27C70 32 76 54 66 82"/></g></svg></div>
  <div class="app on"><svg viewBox="0 0 96 96"><circle cx="48" cy="48" r="52" fill="#f6f6f6"/><path d="M31 79A34.500 34.500 0 1 1 66 79L60 61A18 18 0 1 0 37 61Z" fill="#e98f49"/><path d="M48 37a11 11 0 0 1 6 20l3 25H40l3-25a11 11 0 0 1 5-20Z" fill="#24416f"/></svg></div>
  <div class="app on"><svg><use href="#webex"/></svg></div>
  <div class="app on"><svg viewBox="0 0 96 96"><defs><linearGradient id="sky" x1="0" y1="0" x2="0" y2="1"><stop offset="0" stop-color="#9dbcf0"/><stop offset="1" stop-color="#bfcbe2"/></linearGradient></defs><rect x="1" y="1" width="94" height="94" rx="20" fill="#f5f5f5"/><path d="M8 20Q8 8 20 8h56q12 0 12 12v32H8Z" fill="url(#sky)"/><path d="M8 52h80v36H20Q8 88 8 76Z" fill="#25436f"/><path d="M8 66q10-4 20 0t20 2l10 20H20Q8 88 8 76Z" fill="#c9d8e4"/><path d="M12 80q6-6 14 0l8 8H20q-8-1-8-8Z" fill="#75634f"/><path d="M52 64h36l9 32q1 4-4 5H47q-5-1-4-5Z" fill="#c7cdd0" stroke="#eee" stroke-width="1.500"/><path d="M58 70h24l6 18H52Z" fill="#9aa4aa"/><path d="M48 52q0-5 5-5h33q5 0 5 5v13q-21 6-43 0Z" fill="#0b0b0b"/></svg></div>
  <i class="dsep"></i>
  <div class="app trash"><svg viewBox="0 0 96 96"><defs><linearGradient id="tr" x1="0" y1="0" x2="1" y2="0"><stop offset="0" stop-color="#54575a"/><stop offset=".5" stop-color="#8b8e91"/><stop offset="1" stop-color="#5d6063"/></linearGradient></defs><path d="M7 6l10 86q3 9 31 9t31-9L89 6Q48 24 7 6Z" fill="url(#tr)"/><ellipse cx="48" cy="6" rx="41" ry="9" fill="#3a3c3f"/><path d="M12 4l10-9 14-3 8 5 8-6 10 7 12-2 11 8-4 8-16 6-20-1-22-3Z" fill="#e4e4e4"/><path d="M24 4l10-8 4 12ZM58-2l8 4-2 12-8-3Z" fill="#8d8d8d"/><path d="M35 3l10-1-4 6Z" fill="#45b7dd"/><path d="M56 2l9 5-7 8Z" fill="#3b5aa0"/><path d="M66 8l8 3-10 5Z" fill="#c2603a"/><path d="M22 12l9-3 3 8Z" fill="#333"/></svg></div>
</footer>
</body>
</html>
```
FILE: styles.css
```css
* { box-sizing: border-box; }
html, body { margin: 0; }
body { width: 3360px; height: 2100px; overflow: hidden; background: #020303; font-family: Inter, "Liberation Sans", sans-serif; display: flex; flex-direction: column; }
svg { display: block; flex: none; overflow: visible; }
i { font-style: normal; display: block; flex: none; }
.defs { position: absolute; }

/* system menu bar */
.menubar { height: 49px; flex: none; display: flex; align-items: center; padding-bottom: 1px; background: linear-gradient(90deg, #e1e5d5 40%, #cfd2bf); font-size: 26px; color: #050505; }
.apple { width: 27px; height: 31px; margin-left: 41px; }
.menus { display: flex; gap: 43px; margin-left: 40px; letter-spacing: -.5px; margin-top: -4px; white-space: nowrap; }
.menus b { letter-spacing: .1px; margin-right: -1px; }
.menus .win { margin-left: -3px; letter-spacing: -.8px; }
.tray { margin-left: auto; display: flex; align-items: center; height: 48px; }
.tray > i { height: 48px; display: flex; align-items: center; justify-content: center; }
.mic { width: 61px; background: #f19a37; border-radius: 8px; }
.boxlogo { font-family: Lato, sans-serif; font-size: 37px; letter-spacing: -3px; font-weight: 700; margin-top: -5px; }
.c84 { width: 84px; margin-left: 12px; }
.c70 { width: 70px; } .c68 { width: 68px; } .c92 { width: 92px; } .c72 { width: 72px; } .c42 { width: 42px; } .c12 { width: 12px; } .c80 { width: 80px; }
.vol { margin-left: 7px; }
.dot { width: 9px; height: 9px; border-radius: 50%; background: #f0a04b; }
.siri { width: 28px; height: 28px; border-radius: 50%; background: radial-gradient(circle, #fff 0 8%, transparent 45%), conic-gradient(#49b39a, #3c87b8, #2c5fae, #7552c0, #e0457f, #d4587a, #49b39a); }
.clock { width: 286px; padding-left: 6px; display: flex; gap: 17px; margin-top: -3px; color: #20211d; letter-spacing: -.1px; white-space: nowrap; }

/* browser window */
.window { position: relative; height: 1891px; flex: none; display: flex; flex-direction: column; border-radius: 20px; overflow: hidden; background: #1c1d21; }
.window::after { content: ""; position: absolute; inset: 0; border: 1px solid #0a0c0c; border-left: 0; border-right: 0; border-radius: 20px; box-shadow: inset 0 0 0 2px rgba(255,255,255,.24); pointer-events: none; }
.tabstrip { height: 81px; flex: none; background: #19355f; display: flex; align-items: center; padding-top: 1px; }
.lights { width: 184px; padding-left: 42px; display: flex; gap: 16px; flex: none; }
.lights i { width: 24px; height: 24px; border-radius: 50%; }
.l-r { background: #ee6a5f; } .l-y { background: #f5bd4f; } .l-g { background: #61c455; }
.tab { position: relative; width: 476px; flex: none; display: flex; align-items: center; padding-left: 16px; height: 68px; }
.tab.active { align-self: flex-end; padding-bottom: 12px; }
.tab.active::before { content: ""; position: absolute; left: 0; top: 0; width: 464px; height: 69px; border-radius: 20px 20px 0 0; background: #275496; }
.tab.active::after { content: ""; position: absolute; left: -20px; bottom: -1px; width: 504px; height: 20px; background: radial-gradient(circle at 0 0, transparent 19.500px, #275496 20px) left / 20px 20px no-repeat, radial-gradient(circle at 100% 0, transparent 19.500px, #275496 20px) right / 20px 20px no-repeat; }
.tab.sep::after { content: ""; position: absolute; right: 5px; top: 19px; width: 3px; height: 32px; background: #275496; border-radius: 2px; }
.fav, .tt, .x { position: relative; }
.fav { width: 32px; height: 32px; }
.fav.white { background: #fff; }
.tt { width: 336px; margin-left: 16px; font-size: 24px; color: #fff; white-space: nowrap; overflow: hidden; -webkit-mask-image: linear-gradient(90deg, #000 295px, transparent 336px); mask-image: linear-gradient(90deg, #000 295px, transparent 336px); line-height: 32px; }
.x { width: 20px; height: 20px; margin-left: 22px; }
.plus { width: 20px; height: 20px; margin-left: 18px; }
.tabsearch { width: 56px; height: 56px; border-radius: 20px; background: #275496; margin: 0 12px 0 auto; display: flex; align-items: center; justify-content: center; }

.toolbar { height: 94px; flex: none; display: flex; align-items: center; background: radial-gradient(circle at 16px 16px, #275496 16px, #19355f 16.500px) left top / 16px 16px no-repeat, radial-gradient(circle at 0 16px, #275496 16px, #19355f 16.500px) right top / 16px 16px no-repeat, #275496; border-bottom: 2px solid #5479b0; }
.navbtns { width: 240px; padding-left: 32px; display: flex; align-items: center; gap: 48px; flex: none; }
.navbtns svg:last-child { margin-left: -1px; }
.omnibox { width: 2700px; height: 68px; flex: none; border-radius: 34px; background: #24426f; display: flex; align-items: center; padding: 0 32px 0 10px; }
.chip { width: 202px; height: 48px; border-radius: 24px; background: #275496; display: flex; align-items: center; gap: 13px; padding-left: 16px; font-size: 25px; letter-spacing: -.5px; color: #eda69e; white-space: nowrap; }
.url { margin-left: 16px; font-size: 28px; white-space: nowrap; line-height: 40px; color: #fff; }
.url s { color: #eda69e; letter-spacing: -.3px; }
.host { letter-spacing: .03px; }
.dim { color: #a9b7cc; }
.path { letter-spacing: -.3px; }
.star { margin-left: auto; }
.ext { display: flex; align-items: center; margin-left: 37px; }
.ext svg:nth-child(2) { margin-left: 41px; }
.vsep { width: 3px; height: 32px; background: #19355f; margin: 0 37px 0 35px; }
.ext svg:nth-child(5) { margin-left: 37px; }
.ext svg:nth-child(6) { margin-left: 48px; }

/* console */
.notice { height: 66px; flex: none; background: #80170f; color: #fff; text-align: center; font-size: 27px; letter-spacing: -.29px; line-height: 68px; }
.masthead { height: 140px; flex: none; background: #030303; display: flex; align-items: flex-start; padding-left: 51px; }
.burger { margin-top: 50px; }
.hat { margin: 30px 0 0 51px; }
.brand { margin: 36px 0 0 9px; display: flex; flex-direction: column; color: #fff; font-size: 34px; line-height: 36.500px; letter-spacing: .7px; }
.brand b { word-spacing: -4px; letter-spacing: .3px; }
.tools { margin-left: auto; height: 137px; display: flex; align-items: center; gap: 64px; padding-right: 87px; }
.tools svg:nth-child(2) { margin: 0 1px 0 2px; }
.tools svg:nth-child(3) { margin-right: 1px; }
.user { display: flex; align-items: center; gap: 8px; font-size: 31px; letter-spacing: -.65px; color: #a9abad; margin-left: 47px; padding-top: 2px; }
.body { flex: 1; min-height: 0; display: flex; background: #1c1d21; color: #e0e0e0; font-size: 27px; letter-spacing: -.3px; }
.sidebar { width: 549px; border-right: 1px solid #47484c; overflow: hidden; flex: none; font-size: 31px; letter-spacing: -.4px; }
.persp, .sec { display: flex; align-items: center; padding-left: 48px; }
.persp { height: 128px; padding-top: 14px; border-bottom: 2px solid #434448; }
.persp span { margin-left: 16px; }
.persp .car { margin-left: auto; margin-right: 70px; }
.sec { height: 114px; border-bottom: 2px solid #434448; padding-bottom: 2px; }
.sec svg { margin: -4px 75px 0 auto; }
.sec.two { height: 112px; padding-bottom: 3px; }
.sec.open { height: 110px; border: 0; padding-bottom: 4px; }
.sec.open svg { margin-right: 70px; }
.links { margin: 0; padding: 0 0 32px; list-style: none; font-size: 27px; letter-spacing: -.28px; border-bottom: 2px solid #434448; }
.links li { height: 74px; line-height: 76px; padding-left: 96px; }
.links .cur { margin-left: 48px; padding-left: 40px; border-left: 8px solid #82bbf3; background: #28292d; }
.links .rule { height: 2px; margin: 16px 48px 16px 96px; padding: 0; background: #4a4b4f; }
.scroll { width: 31px; flex: none; background: #2b2b2a; border-right: 3px solid #4a4a4c; padding: 6px 0 0 7px; }
.scroll i { width: 16px; height: 555px; border-radius: 8px; background: #6e6e6e; }
.main { flex: 1; }
.project { height: 86px; display: flex; align-items: center; gap: 39px; padding: 0 0 2px 48px; background: #292a2e; border-bottom: 2px solid #45464a; box-shadow: 0 3px 8px rgba(0,0,0,.5); color: #fff; font-size: 31px; letter-spacing: -.46px; }
.content { padding: 48px 48px 0; }
.head { display: flex; justify-content: space-between; height: 66px; align-items: center; }
h1 { margin: -6px 0 0; font-size: 47px; font-weight: 500; letter-spacing: -.5px; color: #fff; }
button { width: 205px; height: 66px; border: 0; border-radius: 6px; background: #2869c8; color: #e0e0e2; font: 27px Inter, sans-serif; letter-spacing: -.2px; padding: 0; }
.filters { margin-top: 76px; height: 66px; display: flex; align-items: center; }
.ctl { height: 66px; background: #36373b; border-bottom: 2px solid #a9aaac; display: flex; align-items: center; padding: 0 16px; }
.ctl span { padding-top: 2px; }
.filter { width: 213px; margin-right: 32px; }
.filter span { margin-left: 12px; letter-spacing: 0; }
.ctl .c { margin-left: auto; margin-right: 21px; margin-top: 1px; }
.name { width: 182px; margin-right: 2px; }
.search { width: 516px; padding: 0 13px 0 18px; justify-content: space-between; color: #a4a5a8; letter-spacing: -.8px; }
kbd { width: 32px; height: 38px; border: 2px solid #5c5d61; border-radius: 6px; font: 27px/34px Inter, sans-serif; text-align: center; color: #a9aaac; }
.cols { margin-left: 63px; }
.table { margin-top: 38px; }
.row { display: grid; grid-template-columns: 400px 432px 225px 223px 433px 268px 268px 267px 1fr; padding: 17px 0 15px 48px; height: 160px; border-bottom: 2px solid #434448; line-height: 42px; }
.th { height: 78px; padding-top: 19px; font-weight: 600; letter-spacing: .1px; color: #e0e0e0; }
.th > div { display: flex; align-items: center; height: 42px; gap: 40px; }
.th svg { width: 14px; height: 29px; margin-top: -1px; }
.th .up { width: 12px; height: 26px; }
.th .asc { color: #429ef0; }
.res { display: flex; align-items: flex-start; gap: 8px; color: #429ef0; letter-spacing: -.12px; }
.res b { height: 36px; margin-top: 2px; border-radius: 18px; color: #fff; font-weight: 400; text-align: center; line-height: 36px; letter-spacing: -.5px; }
.p { width: 36px; background: #3e8f90; }
.rs { width: 52px; background: #17407f; }
.st, .dt { display: flex; align-items: flex-start; gap: 10px; letter-spacing: -.35px; }
.st svg { width: 28px; height: 28px; margin-top: 6px; }
.dt { letter-spacing: -.5px; gap: 11px; }
.dt svg { width: 28px; height: 28px; margin-top: 1px; }
.n { letter-spacing: 0; }
.kb { padding: 5px 0 0 27px; }
.kb svg { width: 10px; height: 30px; }

/* dock */
.dock { width: 2715px; height: 147px; margin: 3px 0 0 323px; flex: none; border: 2px solid #353837; border-radius: 46px; background: #151716; display: flex; padding-left: 3px; }
.app { position: relative; width: 126px; flex: none; display: flex; justify-content: center; padding-top: 18px; }
.app svg { width: 96px; height: 96px; }
.app.on::after { content: ""; position: absolute; left: 58px; bottom: 2px; width: 8px; height: 8px; border-radius: 50%; background: #929392; }
.cal { width: 94px; height: 94px; margin-top: 1px; border-radius: 21px; overflow: hidden; background: linear-gradient(#fff, #efede9); display: flex; flex-direction: column; align-items: center; color: #222; font: 300 56px/62px Roboto, sans-serif; }
.cal b { width: 100%; background: #e86255; color: #fff; font: 500 21px/29px Roboto, sans-serif; text-align: center; }
.dsep { width: 2px; height: 108px; margin: 17px 0 0 31px; background: #48494a; }
.trash { margin-left: 26px; }
```
